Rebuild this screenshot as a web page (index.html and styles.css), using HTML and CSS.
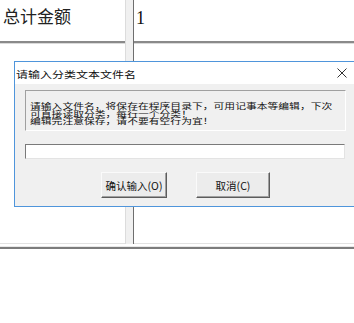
FILE: index.html
```html
<!DOCTYPE html>
<html lang="zh-CN">
<head>
    <meta charset="UTF-8">
    <meta name="viewport" content="width=device-width, initial-scale=1.0">
    <title>请输入分类文本文件名</title>
    <link rel="stylesheet" href="styles.css">
</head>
<body>
    <div class="sheet">
        <div class="cell head label">总计金额</div>
        <div class="divider"></div>
        <div class="cell head value">1</div>
        <div class="cell body"></div>
        <div class="cell body"></div>
    </div>
    <div class="rule"></div>

    <div class="dialog">
        <div class="title-bar">
            <span class="title">请输入分类文本文件名</span>
            <svg class="close" width="10" height="10" viewBox="0 0 10 10">
                <path d="M0.5 0.5 L9.5 9.5 M9.5 0.5 L0.5 9.5" stroke="#333" stroke-width="1" fill="none"/>
            </svg>
        </div>
        <div class="dialog-body">
            <div class="message">
                <div class="message-text">
                    <div>请输入文件名，将保存在程序目录下，可用记事本等编辑，下次</div>
                    <div>可直接读取分类，每行一个分类！</div>
                    <div>编辑完注意保存，请不要有空行为宜！</div>
                </div>
            </div>
            <input type="text" class="name-input">
            <div class="buttons">
                <button class="btn ok">确认输入(O)</button>
                <button class="btn cancel">取消(C)</button>
            </div>
        </div>
    </div>
</body>
</html>
```

FILE: styles.css
```css
body {
    margin: 0;
    padding: 0;
    background-color: #fff;
    font-family: "Noto Sans CJK SC", "Liberation Sans", sans-serif;
    width: 354px;
    height: 323px;
    overflow: hidden;
    position: relative;
}
.sheet {
    display: grid;
    grid-template-columns: 125px 9px 1fr;
    grid-template-rows: 43px 201px;
}
.cell {
    background-color: #fff;
}
.cell.head {
    border-bottom: 2px solid #8a8a8a;
}
.cell.body {
    border-top: 1px solid #dadada;
    border-bottom: 1px solid #e2e2e2;
}
.divider {
    grid-row: 1 / span 2;
    grid-column: 2;
    background-color: #f0f0f0;
    border-left: 1px solid #dcdcdc;
    border-right: 1px solid #6e6e6e;
}
.label {
    font-size: 17px;
    color: #222;
    padding: 4px 0 0 3px;
    line-height: 24px;
}
.value {
    font-family: "Liberation Serif", serif;
    font-size: 18px;
    color: #111;
    padding: 7px 0 0 2px;
    line-height: 22px;
}
.rule {
    height: 2px;
    margin-top: 2px;
    border-top: 1px solid #e8e8e8;
    background-color: #7c7c7c;
}
.dialog {
    position: absolute;
    left: 14px;
    top: 61px;
    width: 352px;
    border: 1px solid #4f95db;
    background-color: #f0f0f0;
}
.title-bar {
    height: 22px;
    background-color: #fff;
    display: flex;
    align-items: center;
    justify-content: space-between;
    padding: 0 20px 0 1px;
}
/* the screenshot is squashed vertically, so the dialog text is too */
.title {
    font-size: 12px;
    color: #111;
    display: inline-block;
    transform: scaleY(0.78);
}
.dialog-body {
    padding: 6px 10px 8px 10px;
}
.message {
    width: 315px;
    height: 28px;
    padding: 11px 0 0 4px;
    border: 1px solid;
    border-color: #a0a0a0 #fff #fff #a0a0a0;
    overflow: hidden;
}
.message-text {
    font-size: 10.8px;
    line-height: 11px;
    color: #111;
    white-space: nowrap;
    transform: scaleY(0.7);
    transform-origin: top left;
}
.name-input {
    display: block;
    box-sizing: border-box;
    width: 320px;
    height: 15px;
    margin: 13px 0 0 0;
    padding: 0;
    border: 1px solid;
    border-color: #7a7a7a #e3e3e3 #e3e3e3 #7a7a7a;
    background-color: #fff;
}
.buttons {
    display: flex;
    gap: 29px;
    margin: 13px 0 0 76px;
}
.btn {
    height: 26px;
    padding: 0;
    font-family: "Noto Sans CJK SC", "Liberation Sans", sans-serif;
    font-size: 10.5px;
    color: #111;
    background-color: #ececec;
    border: 1px solid;
    border-color: #fafafa #5c5c5c #5c5c5c #fafafa;
    box-shadow: inset -1px -1px #a0a0a0;
}
.btn.ok {
    width: 66px;
}
.btn.cancel {
    width: 74px;
}
```
